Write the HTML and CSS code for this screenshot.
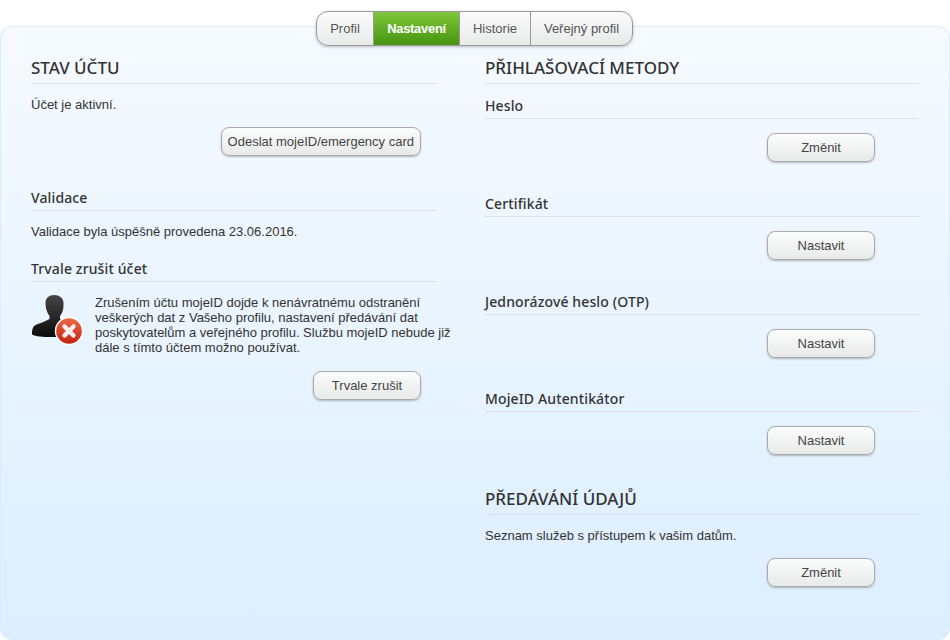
FILE: index.html
```html
<!DOCTYPE html>
<html lang="cs">
<head>
<meta charset="utf-8">
<title>mojeID</title>
<link rel="stylesheet" href="styles.css">
</head>
<body>
<nav class="tabs">
  <a class="tab">Profil</a>
  <a class="tab active">Nastavení</a>
  <a class="tab">Historie</a>
  <a class="tab">Veřejný profil</a>
</nav>
<main class="panel">
  <section class="col col-left">
    <h2>STAV ÚČTU</h2>
    <p class="first">Účet je aktivní.</p>
    <div class="actions a-left"><button>Odeslat mojeID/emergency card</button></div>
    <h3 class="h-valid">Validace</h3>
    <p class="first">Validace byla úspěšně provedena 23.06.2016.</p>
    <h3 class="h-cancel">Trvale zrušit účet</h3>
    <div class="warn">
      <svg class="warn-icon" width="53" height="53" viewBox="0 0 53 53">
        <defs>
          <linearGradient id="person" x1="0" y1="0" x2="0" y2="1"><stop offset="0" stop-color="#444"/><stop offset="1" stop-color="#0c0c0c"/></linearGradient>
          <linearGradient id="red" x1="0" y1="0" x2="0" y2="1"><stop offset="0" stop-color="#ee6a48"/><stop offset="1" stop-color="#c4200f"/></linearGradient>
        </defs>
        <path fill="url(#person)" d="M23 1c-5 0-8.500 3-8.500 8 0 2.500.5 5 1 7 .5 2 1.500 4 3 6v3l-6 3c-6 2-10 3-11 7-.5 2-.5 3-.5 5.500 4 2 10 2.500 20 2.500h16V28l-8-3v-3c1.500-2 2.500-4 3-6 .5-2 .5-4.500.5-7 0-5-4-8-9.500-8z"/>
        <circle cx="38" cy="37" r="13.500" fill="url(#red)" stroke="#fff" stroke-width="1.400"/>
        <path d="M33.500 32.500l9 9M42.500 32.500l-9 9" stroke="#f4eeee" stroke-width="4.500" stroke-linecap="round"/>
      </svg>
      <p>Zrušením účtu mojeID dojde k nenávratnému odstranění veškerých dat z Vašeho profilu, nastavení předávání dat poskytovatelům a veřejného profilu. Službu mojeID nebude již dále s tímto účtem možno používat.</p>
    </div>
    <div class="actions a-left a-cancel"><button class="std">Trvale zrušit</button></div>
  </section>
  <section class="col col-right">
    <h2>PŘIHLAŠOVACÍ METODY</h2>
    <h3 class="h-first">Heslo</h3>
    <div class="actions method"><button class="std">Změnit</button></div>
    <h3 class="h-method">Certifikát</h3>
    <div class="actions method"><button class="std">Nastavit</button></div>
    <h3 class="h-method">Jednorázové heslo (OTP)</h3>
    <div class="actions method"><button class="std">Nastavit</button></div>
    <h3 class="h-method tight">MojeID Autentikátor</h3>
    <div class="actions method"><button class="std">Nastavit</button></div>
    <h2 class="h-share">PŘEDÁVÁNÍ ÚDAJŮ</h2>
    <p class="first">Seznam služeb s přístupem k vašim datům.</p>
    <div class="actions method"><button class="std">Změnit</button></div>
  </section>
</main>
</body>
</html>
```
FILE: styles.css
```css
* { box-sizing: border-box; }
html, body { margin: 0; height: 640px; overflow: hidden; }
body {
  background: #fff;
  color: #333;
  font: 13px/15px "Liberation Sans", Arial, sans-serif;
  padding-top: 26px;
}
.tabs {
  display: flex;
  width: 317px;
  height: 35px;
  margin: -15px 0 -20px 316px;
  position: relative;
  z-index: 1;
  border: 1px solid #999;
  border-radius: 12px;
  overflow: hidden;
  box-shadow: 0 1px 3px rgba(0,0,0,.25);
  background: linear-gradient(#fbfbfb, #e8eaea);
}
.tab {
  display: flex;
  align-items: center;
  justify-content: center;
  color: #555;
  border-left: 1px solid #999;
  font-size: 13px;
}
.tab:nth-child(1) { width: 56px; border-left: 0; }
.tab:nth-child(2) { width: 86px; }
.tab:nth-child(3) { width: 71px; }
.tab:nth-child(4) { flex: 1; }
.tab.active {
  color: #fff;
  font-weight: bold;
  background: linear-gradient(#7fc63a, #479410);
  letter-spacing: -.3px;
}
.panel {
  display: flex;
  height: 614px;
  padding: 20px 31px 0 31px;
  border: 1px solid #dcecfa;
  border-bottom: 0;
  border-radius: 12px;
  background: linear-gradient(#f6faff, #dceeff);
}
.col-left { width: 406px; margin-left: -1px; margin-right: 48px; }
.col-right { width: 434px; margin-right: -1px; }
h2, h3 {
  margin: 0;
  font-family: "Noto Sans", sans-serif;
  color: #333;
  border-bottom: 1px solid #dbe0e6;
}
h2 { font-size: 17px; font-weight: 500; height: 37px; line-height: 42px; }
h3 { font-size: 14px; font-weight: 500; line-height: 22px; height: 24px; letter-spacing: .13px; }
p { margin: 0; }
p.first { margin-top: 13px; }
p.first + .actions { margin-top: 15px; }
.actions { display: flex; justify-content: flex-end; margin-top: 14px; }
.a-left { padding-right: 16px; }
button {
  height: 29px;
  font: 13px "Liberation Sans", Arial, sans-serif;
  color: #444;
  padding: 0 6px;
  border: 1px solid #aaa;
  border-radius: 8px;
  background: linear-gradient(#fbfcfc, #e8eaea);
  box-shadow: 0 1px 2px rgba(0,0,0,.25);
}
button.std { width: 108px; }
.h-valid { margin-top: 31px; }
p.first + .h-cancel { margin-top: 19px; }
.warn { display: flex; margin-top: 12px; margin-right: -16px; }
.warn-icon { flex: none; margin-right: 11px; }
.warn p { margin-top: 1px; }
.a-cancel { margin-top: 16px; }
.h-first { margin-top: 11px; }
.method { padding-right: 44px; }
.h-method { margin-top: 31px; }
.h-method.tight { margin-top: 30px; }
.h-share { margin-top: 28px; height: 32px; line-height: 32px; }
```
